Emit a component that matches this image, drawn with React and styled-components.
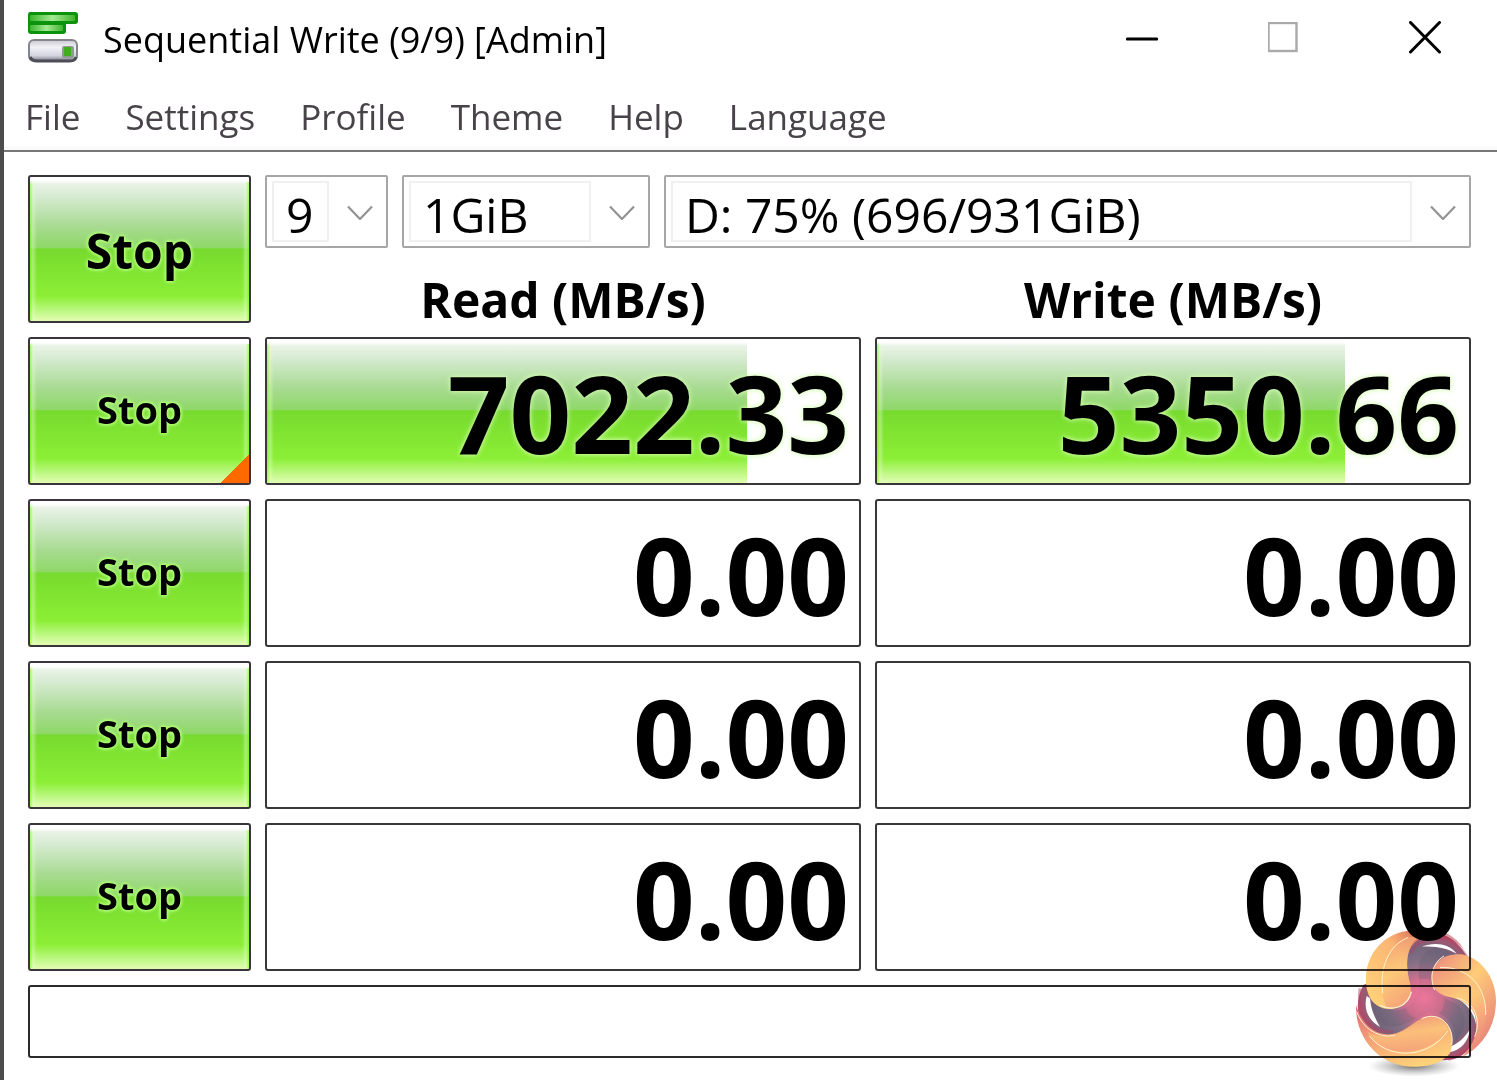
import React from "react";
import styled, { createGlobalStyle, css } from "styled-components";

const GlobalStyle = createGlobalStyle`
  *, *::before, *::after { box-sizing: border-box; }
  body { margin: 0; background: #fff; }
  button, select { font-family: inherit; color: inherit; margin: 0; }
`;

const glossyGreen = css`
  background:
    linear-gradient(to bottom, #fff 0, #fff 3px, transparent 7px),
    linear-gradient(to right, rgba(120, 255, 20, 0.6) 0, rgba(225, 255, 200, 0.45) 3px, transparent 7px),
    linear-gradient(
      to bottom,
      #f4f8f3 0%,
      #d5ead0 14%,
      #a8db92 34%,
      #8fd868 49%,
      #77da2e 50%,
      #80e431 65%,
      #8cef36 83%,
      #b8f77c 92%,
      #e4fcb4 100%
    );
`;

const Window = styled.div`
  min-height: 100vh;
  border-left: 4px solid #4c4c4c;
  background: #fff;
  color: #000;
  font-family: "Open Sans", "Noto Sans", sans-serif;
  position: relative;
`;

const TitleBar = styled.header`
  display: flex;
  align-items: center;
  height: 76px;
  padding-left: 23px;
`;

const Title = styled.h1`
  flex: 1;
  margin: 0 0 0 24px;
  padding-top: 4px;
  font-size: 36px;
  font-weight: 400;
  line-height: 48px;
  white-space: nowrap;
`;

const ControlButton = styled.button`
  display: grid;
  place-items: center;
  width: 142px;
  height: 76px;
  padding: 0;
  border: 0;
  background: none;
`;

const MenuBar = styled.nav`
  display: flex;
  align-items: center;
  gap: 45px;
  height: 76px;
  padding: 8px 21px 0;
  border-bottom: 2px solid #777;
  box-shadow: inset 0 -4px 0 #fafafa;
`;

const MenuButton = styled.button`
  padding: 0;
  border: 0;
  background: none;
  color: #484348;
  font-size: 35px;
  line-height: 48px;
`;

const Content = styled.main`
  display: grid;
  grid-template-columns: 223px 1fr 1fr;
  grid-template-rows: repeat(5, 148px) 73px;
  gap: 14px;
  padding: 23px 26px 22px 24px;
`;

const StopButton = styled.button`
  ${glossyGreen}
  position: relative;
  padding: ${(p) => (p.$large ? "4px 0 0" : "0 0 4px")};
  overflow: hidden;
  border: 2px solid #3a343c;
  border-radius: 3px;
  color: #000;
  font-size: ${(p) => (p.$large ? 48 : 38)}px;
  font-weight: 700;
  line-height: 1;
  text-shadow: 0 0 3px #a6ff66, 0 0 3px #b6ff80, 0 0 4px #b6ff80, 0 0 5px #b6ff80;

  &::after {
    content: "";
    position: absolute;
    inset: 5px 0 0 auto;
    width: 7px;
    background: linear-gradient(to left, rgba(120, 255, 20, 0.6) 0, rgba(225, 255, 200, 0.45) 3px, transparent 7px);
  }
`;

const Corner = styled.span`
  position: absolute;
  z-index: 1;
  right: 0;
  bottom: 0;
  width: 28px;
  height: 28px;
  background: linear-gradient(135deg, transparent 50%, #ff6a00 50%);
`;

const Setup = styled.div`
  grid-column: 2 / 4;
  display: flex;
  flex-direction: column;
  justify-content: space-between;
`;

const Combos = styled.div`
  display: grid;
  grid-template-columns: 123px 248px 1fr;
  gap: 14px;
`;

const Combo = styled.label`
  display: flex;
  align-items: center;
  height: 73px;
  padding: 5px 13px 5px 5px;
  border: 2px solid #a6a6a6;
  border-radius: 2px;
`;

const ComboSelect = styled.select`
  appearance: none;
  flex: 1;
  min-width: 0;
  height: 61px;
  margin-right: 18px;
  padding: 6px 0 0 12px;
  border: 2px solid #f0f0f0;
  border-radius: 0;
  background: #fff;
  color: #000;
  font-size: 48px;
  line-height: 52px;
`;

const Headings = styled.div`
  display: grid;
  grid-template-columns: 1fr 1fr;
  gap: 14px;
`;

const Heading = styled.h2`
  margin: 0;
  font-size: 48px;
  font-weight: 700;
  line-height: 46px;
  text-align: center;
`;

const Meter = styled.div`
  display: grid;
  overflow: hidden;
  border: 2px solid #3a373a;
  border-radius: 3px;
`;

const Fill = styled.div`
  ${glossyGreen}
  grid-area: 1 / 1;
`;

const Reading = styled.output`
  grid-area: 1 / 1;
  padding: 4px 10px 0 0;
  font-size: 108px;
  font-weight: 700;
  line-height: 140px;
  text-align: right;
  text-shadow: ${(p) => (p.$halo ? "0 0 4px rgba(215, 255, 180, 0.8), 0 0 6px rgba(215, 255, 180, 0.7)" : "none")};
`;

const StatusBox = styled.div`
  grid-column: 1 / -1;
  border: 2px solid #2c2a2c;
  border-radius: 3px;
`;

const Watermark = styled.svg`
  position: absolute;
  right: 0;
  bottom: 0;
  width: 157px;
  height: 170px;
  mix-blend-mode: multiply;
  pointer-events: none;
`;

function DiskIcon() {
  return (
    <svg width="52" height="52" viewBox="0 0 52 52" aria-hidden="true">
      <defs>
        <linearGradient id="bar" x1="0" y1="0" x2="1" y2="0">
          <stop offset="0" stopColor="#3cb62e" />
          <stop offset="0.5" stopColor="#a5eb94" />
          <stop offset="1" stopColor="#3fb42c" />
        </linearGradient>
        <linearGradient id="disk" x1="0" y1="0" x2="0" y2="1">
          <stop offset="0" stopColor="#c9c9cf" />
          <stop offset="0.35" stopColor="#f2f2f7" />
          <stop offset="0.75" stopColor="#d3d3df" />
          <stop offset="1" stopColor="#777782" />
        </linearGradient>
      </defs>
      <path d="M6 27 H40 L46 31 H4 Z" fill="#f1eef1" />
      <path d="M3 0 H48 Q51 0 51 3 V9 Q51 12 48 12 H39 V19 Q39 22 36 22 H4 Q1 22 1 19 V3 Q1 0 3 0 Z" fill="#0c930e" />
      <rect x="3" y="3" width="45" height="6" rx="1" fill="url(#bar)" />
      <rect x="3" y="13" width="33" height="6" rx="1" fill="url(#bar)" />
      <rect x="2" y="28" width="48" height="21" rx="5" fill="url(#disk)" stroke="#85858d" strokeWidth="2" />
      <path d="M3 45 Q5 49 10 49 H43 Q48 49 49 45" fill="none" stroke="#4d4d57" strokeWidth="3" />
      <rect x="35" y="34" width="12" height="12" rx="2" fill="#8f9a90" />
      <rect x="37" y="35" width="7" height="9" rx="1" fill="#3db01a" />
    </svg>
  );
}

function Chevron() {
  return (
    <svg width="26" height="16" viewBox="0 0 26 16" aria-hidden="true">
      <path d="M1 2.5 L13 15 L25 2.5" fill="none" stroke="#939393" strokeWidth="2.2" />
    </svg>
  );
}

function SwirlMark() {
  return (
    <Watermark viewBox="0 0 471 510" aria-hidden="true">
      <defs>
        <radialGradient id="core" gradientUnits="userSpaceOnUse" cx="252" cy="265" r="200">
          <stop offset="0" stopColor="#fb78a0" />
          <stop offset="0.28" stopColor="#d5708f" />
          <stop offset="0.55" stopColor="#857085" />
          <stop offset="0.75" stopColor="#74677c" />
          <stop offset="1" stopColor="#b5506c" />
        </radialGradient>
        <linearGradient id="lobeA" x1="0" y1="0.7" x2="1" y2="0">
          <stop offset="0" stopColor="#ffcf78" />
          <stop offset="0.5" stopColor="#fbb573" />
          <stop offset="1" stopColor="#c94a4c" />
        </linearGradient>
        <linearGradient id="lobeB" x1="0" y1="0" x2="0.8" y2="1">
          <stop offset="0" stopColor="#ea8580" />
          <stop offset="0.45" stopColor="#ffcd78" />
          <stop offset="1" stopColor="#e57a7b" />
        </linearGradient>
        <linearGradient id="lobeC" x1="0.1" y1="0" x2="0.6" y2="1">
          <stop offset="0" stopColor="#dc6a76" />
          <stop offset="0.5" stopColor="#f5a377" />
          <stop offset="1" stopColor="#ffd27a" />
        </linearGradient>
        <linearGradient id="inner" x1="0" y1="0" x2="0.3" y2="1">
          <stop offset="0" stopColor="#ec8f7d" />
          <stop offset="0.55" stopColor="#ffcf7a" />
          <stop offset="1" stopColor="#f2987a" />
        </linearGradient>
        <radialGradient id="shade">
          <stop offset="0" stopColor="#555" stopOpacity="0.85" />
          <stop offset="1" stopColor="#999" stopOpacity="0" />
        </radialGradient>
      </defs>
      <ellipse cx="222" cy="468" rx="138" ry="32" fill="url(#shade)" />

      <path d="M200 90 C250 50 340 55 385 150 C340 130 300 145 280 190 C285 235 310 255 350 265 C400 290 420 350 405 390 C385 430 350 455 300 450 L240 400 L100 380 C60 350 35 290 70 225 L130 200 Z" fill="url(#core)" />
      <path d="M236 190 C232 120 290 95 340 130 C295 135 268 165 275 215 C282 250 320 268 350 282 C385 310 380 360 345 395 C350 345 320 310 270 305 C225 320 205 350 150 350 C110 340 90 310 95 270 C120 300 170 315 210 285 C238 260 240 225 236 190 Z" fill="#5f596f" opacity="0.28" />
      <circle cx="252" cy="268" r="62" fill="url(#core)" opacity="0.7" />
      <path d="M212 130 C235 75 330 60 380 140 M60 235 C50 320 90 370 160 365 M410 320 C425 390 370 440 325 448" fill="none" stroke="#b04468" strokeWidth="9" opacity="0.5" />

      <path d="M246 110 C280 96 325 98 350 131 C325 116 290 107 246 110 Z" fill="#fff" />
      <path d="M80 258 C70 298 84 330 120 351 C104 322 92 298 90 265 Z" fill="#fff" />
      <path d="M328 427 C364 420 386 393 389 359 C372 386 350 402 331 410 Z" fill="#fff" />

      <path d="M285 75 C225 45 135 62 93 140 C75 175 73 220 86 255 C98 285 125 299 155 297 C195 292 218 265 211 225 C202 190 196 155 208 120 C222 90 250 76 285 75 Z" fill="url(#lobeA)" />
      <path d="M240 78 C150 80 100 170 138 292 C190 300 220 265 211 225 C202 190 196 155 208 120 C215 100 225 88 240 78 Z" fill="url(#inner)" opacity="0.65" />
      <path d="M235 58 C285 48 345 70 373 120 C340 80 275 65 235 85 Z" fill="#b52f3c" opacity="0.5" />
      <path d="M128 250 C118 175 145 105 205 82" fill="none" stroke="#fff3cf" strokeWidth="3" />
      <path d="M120 286 C160 305 205 290 214 245" fill="none" stroke="#fff3cf" strokeWidth="4" />

      <path d="M275 200 C275 155 315 130 365 133 C430 145 475 215 467 290 C462 360 420 415 365 442 C405 405 425 340 395 298 C375 268 340 265 315 257 C285 247 275 225 275 200 Z" fill="url(#lobeB)" />
      <path d="M280 175 C360 165 435 215 437 310 C436 350 425 380 408 400 C420 350 410 310 385 286 C360 262 330 264 305 250 C275 232 272 205 280 175 Z" fill="url(#inner)" opacity="0.65" />
      <path d="M300 172 C390 170 440 235 437 315" fill="none" stroke="#fff3cf" strokeWidth="3" />
      <path d="M284 240 C268 205 275 160 312 138 M350 264 C405 275 425 330 404 380" fill="none" stroke="#fff3cf" strokeWidth="3" />

      <path d="M48 285 C45 390 125 475 230 470 C275 470 310 455 330 430 C345 385 335 335 290 320 C250 310 225 340 190 360 C145 388 75 375 48 285 Z" fill="url(#lobeC)" />
      <path d="M80 364 C125 445 255 450 325 358 C310 320 270 310 235 332 C195 360 150 400 80 364 Z" fill="url(#inner)" opacity="0.6" />
      <path d="M88 378 C145 450 265 448 324 362" fill="none" stroke="#fff3cf" strokeWidth="3" />
      <path d="M50 305 C75 370 130 385 165 375 M245 326 C300 300 345 350 335 405" fill="none" stroke="#fff3cf" strokeWidth="3" />
    </Watermark>
  );
}

function ComboBox({ label, value }) {
  return (
    <Combo>
      <ComboSelect aria-label={label} defaultValue={value}>
        <option value={value}>{value}</option>
      </ComboSelect>
      <Chevron />
    </Combo>
  );
}

function SpeedMeter({ label, value, percent }) {
  return (
    <Meter role="group" aria-label={label}>
      {percent > 0 && <Fill style={{ width: `${percent}%` }} />}
      <Reading $halo={percent > 0}>{value}</Reading>
    </Meter>
  );
}

const menus = ["File", "Settings", "Profile", "Theme", "Help", "Language"];

const tests = [
  { read: "7022.33", readPercent: 81, write: "5350.66", writePercent: 79, marked: true },
  { read: "0.00", readPercent: 0, write: "0.00", writePercent: 0 },
  { read: "0.00", readPercent: 0, write: "0.00", writePercent: 0 },
  { read: "0.00", readPercent: 0, write: "0.00", writePercent: 0 },
];

export default function App() {
  return (
    <>
      <GlobalStyle />
      <Window>
        <TitleBar>
          <DiskIcon />
          <Title>Sequential Write (9/9) [Admin]</Title>
          <ControlButton aria-label="Minimize">
            <svg width="32" height="32" viewBox="0 0 32 32">
              <path d="M1.5 17 H30.5" stroke="#000" strokeWidth="3.2" strokeLinecap="round" />
            </svg>
          </ControlButton>
          <ControlButton aria-label="Maximize" disabled>
            <svg width="32" height="32" viewBox="0 0 32 32">
              <rect x="0.5" y="1" width="28" height="28" fill="none" stroke="#aaa" strokeWidth="2.4" />
            </svg>
          </ControlButton>
          <ControlButton aria-label="Close">
            <svg width="34" height="34" viewBox="0 0 34 34">
              <path d="M1.5 1.5 L30.5 31 M30.5 1.5 L1.5 31" stroke="#000" strokeWidth="3" strokeLinecap="round" />
            </svg>
          </ControlButton>
        </TitleBar>
        <MenuBar aria-label="Main menu">
          {menus.map((name) => (
            <MenuButton key={name}>{name}</MenuButton>
          ))}
        </MenuBar>
        <Content>
          <StopButton $large>Stop</StopButton>
          <Setup>
            <Combos>
              <ComboBox label="Test count" value="9" />
              <ComboBox label="Test size" value="1GiB" />
              <ComboBox label="Drive" value="D: 75% (696/931GiB)" />
            </Combos>
            <Headings>
              <Heading>Read (MB/s)</Heading>
              <Heading>Write (MB/s)</Heading>
            </Headings>
          </Setup>
          {tests.map((test, i) => (
            <React.Fragment key={i}>
              <StopButton>
                Stop
                {test.marked && <Corner />}
              </StopButton>
              <SpeedMeter label={`Read ${i + 1}`} value={test.read} percent={test.readPercent} />
              <SpeedMeter label={`Write ${i + 1}`} value={test.write} percent={test.writePercent} />
            </React.Fragment>
          ))}
          <StatusBox />
        </Content>
        <SwirlMark />
      </Window>
    </>
  );
}
